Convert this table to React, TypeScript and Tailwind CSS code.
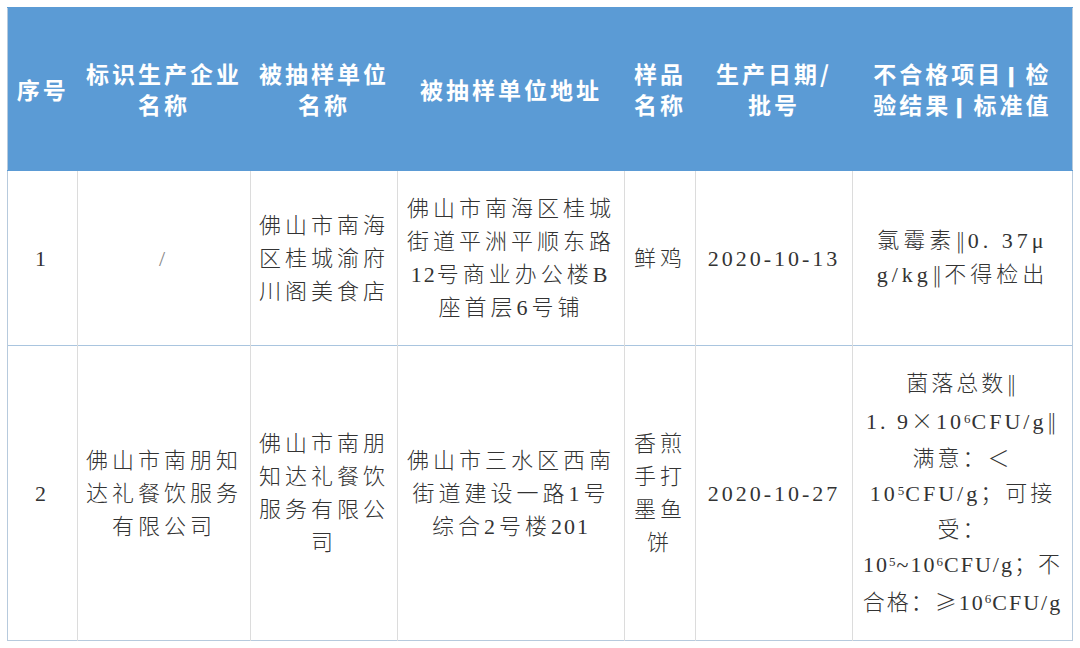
import type { ReactNode } from "react";

// thick separator used in the header
const Bar = () => (
    <span className="mx-[6px] text-[17px] leading-none tracking-normal font-['DejaVu_Sans_Mono',monospace]">▍</span>
);

// double bar used in the results column
const DBar = () => (
    <span className="text-[21px] tracking-[2px] font-['DejaVu_Sans',sans-serif]">‖</span>
);

// full-width symbols
const Wide = ({ children }: { children: ReactNode }) => (
    <span className="font-['Noto_Sans_CJK_SC',sans-serif]">{children}</span>
);

const headers: ReactNode[] = [
    "序号",
    <>标识生产企业<br />名称</>,
    <>被抽样单位<br />名称</>,
    "被抽样单位地址",
    <>样品<br />名称</>,
    <>生产日期/<br />批号</>,
    <>不合格项目<Bar />检<br />验结果<Bar />标准值</>,
];

function Lines({ lines, className = "" }: { lines: ReactNode[]; className?: string }) {
    return (
        <div className={className}>
            {lines.map((line, i) => (
                <div key={i} className="whitespace-nowrap">{line}</div>
            ))}
        </div>
    );
}

const Sup = ({ children }: { children: ReactNode }) => (
    <sup className="text-[13px] tracking-[1px]">{children}</sup>
);

const rows: { height: string; cells: ReactNode[] }[] = [
    {
        height: "h-[175px]",
        cells: [
            "1",
            <span className="text-[#888]">/</span>,
            <Lines lines={["佛山市南海", "区桂城渝府", "川阁美食店"]} />,
            <Lines lines={["佛山市南海区桂城", "街道平洲平顺东路", <><span className="tracking-[2px]">12</span>号商业办公楼B</>, "座首层6号铺"]} />,
            "鲜鸡",
            <span className="tracking-[3px]">2020-10-13</span>,
            <Lines lines={[<>氯霉素<DBar />0. 37μ</>, <>g/kg<DBar />不得检出</>]} />,
        ],
    },
    {
        height: "h-[295px]",
        cells: [
            "2",
            <Lines lines={["佛山市南朋知", "达礼餐饮服务", "有限公司"]} />,
            <Lines lines={["佛山市南朋", "知达礼餐饮", "服务有限公", "司"]} />,
            <Lines lines={["佛山市三水区西南", <>街道建设一路1号</>, <>综合2号楼<span className="tracking-[2px]">201</span></>]} />,
            <Lines lines={["香煎", "手打", "墨鱼", "饼"]} />,
            <span className="tracking-[3px]">2020-10-27</span>,
            <Lines
                className="leading-[35.5px] tracking-[3px]"
                lines={[
                    <>菌落总数<DBar /></>,
                    <>1. 9<Wide>×</Wide>10<Sup>6</Sup>CFU/g<DBar /></>,
                    "满意：＜",
                    <>10<Sup>5</Sup>CFU/g；可接</>,
                    "受：",
                    <span className="tracking-[2px]">10<Sup>5</Sup>~10<Sup>6</Sup>CFU/g；不</span>,
                    <span className="tracking-[2px]">合格：<Wide>≥</Wide>10<Sup>6</Sup>CFU/g</span>,
                ]}
            />,
        ],
    },
];

const widths = ["w-[70px]", "w-[173px]", "w-[147px]", "w-[227px]", "w-[71px]", "w-[157px]", "w-[220px]"];

export default function App() {
    return (
        <div className="w-[1080px] h-[648px] bg-white pt-[7px] pl-[7px]">
            <table className="table-fixed border-collapse w-[1066px] border border-[#b7cadd] font-['Liberation_Serif','Noto_Sans_CJK_SC',serif]">
                <colgroup>
                    {widths.map((w, i) => (
                        <col key={i} className={w} />
                    ))}
                </colgroup>
                <thead>
                    <tr className="h-[163px] bg-[#5b9bd5]">
                        {headers.map((h, i) => (
                            <th
                                key={i}
                                className="p-0 text-center align-middle text-white text-[23px] font-bold leading-[31px] tracking-[3px] font-['Noto_Sans_CJK_SC',sans-serif] border-y border-[#5b9bd5]"
                            >
                                {h}
                            </th>
                        ))}
                    </tr>
                </thead>
                <tbody>
                    {rows.map((row, r) => (
                        <tr key={r} className={row.height}>
                            {row.cells.map((c, i) => (
                                <td
                                    key={i}
                                    className="p-0 text-center align-middle text-[#333] text-[22px] leading-[33px] tracking-[4px] font-light border-t border-t-[#a9c5df] border-x border-x-[#dcdcdc] first:border-l-[#b7cadd] last:border-r-[#b7cadd]"
                                >
                                    {c}
                                </td>
                            ))}
                        </tr>
                    ))}
                </tbody>
            </table>
        </div>
    );
}
